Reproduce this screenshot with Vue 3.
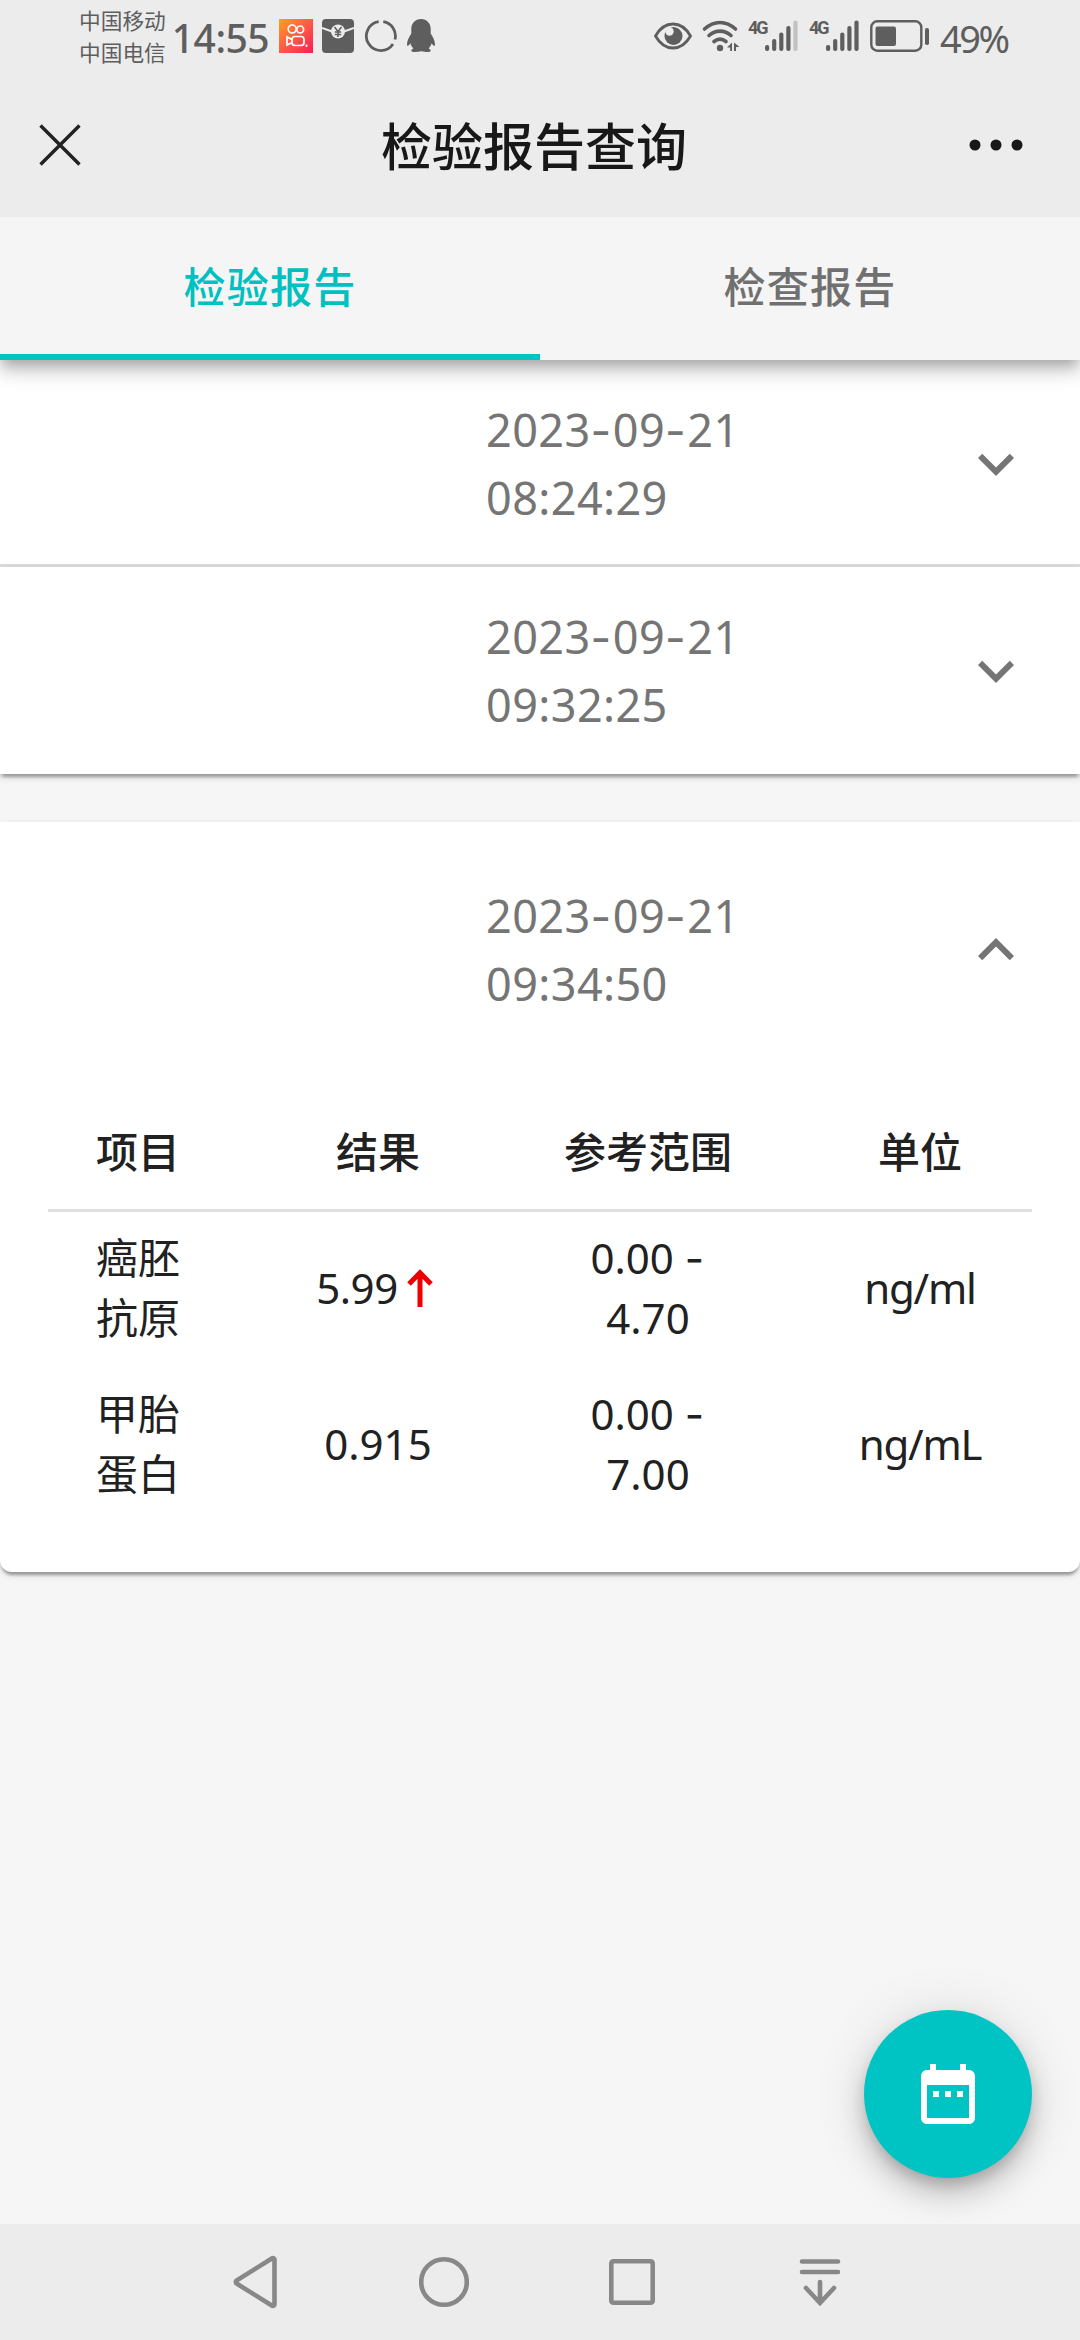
<template>
  <div class="page">
    <!-- 系统状态栏 -->
    <div class="status-bar">
      <div class="carriers">
        <span>中国移动</span>
        <span>中国电信</span>
      </div>
      <span class="clock">14:55</span>
      <div class="notice-icons">
        <svg width="34" height="34" viewBox="0 0 34 34">
          <defs>
            <linearGradient id="ks" x1="0" y1="0" x2="1" y2="1">
              <stop offset="0" stop-color="#ffa01e" />
              <stop offset="0.5" stop-color="#ff5a46" />
              <stop offset="1" stop-color="#f91d55" />
            </linearGradient>
          </defs>
          <rect width="34" height="34" fill="url(#ks)" />
          <g fill="none" stroke="#fff" stroke-width="1.7">
            <circle cx="13.2" cy="10" r="4" />
            <circle cx="21.2" cy="10.4" r="3.4" />
            <rect x="13" y="17.5" width="12" height="9" rx="3" />
            <path d="M13 20.5l-5-2.5v8l5-2.5" />
            <path d="M27.5 25.5v2.5" />
          </g>
        </svg>
        <svg width="32" height="34" viewBox="0 0 32 34">
          <rect width="32" height="34" rx="4" fill="#5e5e5e" />
          <path d="M0 9l10 3.5M32 9l-10 3.5" stroke="#ececec" stroke-width="2" />
          <circle cx="16" cy="12.5" r="7" fill="#ececec" />
          <path
            d="M12.5 8l3.5 4.5L19.5 8M16 12.5V18M12.8 13h6.4M12.8 15.500h6.4"
            fill="none"
            stroke="#5e5e5e"
            stroke-width="1.5"
          />
        </svg>
        <svg width="34" height="34" viewBox="0 0 34 34">
          <g fill="none" stroke="#5e5e5e" stroke-width="2.8">
            <path d="M19.3 2.7A14.5 14.5 0 0 1 31 20.5" />
            <path d="M29 25A14.5 14.5 0 1 1 14.7 2.7" />
          </g>
        </svg>
        <svg width="28" height="34" viewBox="0 0 28 34">
          <path
            d="M14 0C8 0 4.3 4.5 4.3 10v4.5C2 18 0 22 0 25.5c0 2 1.3 1.8 3.3-1.3.6 2 1.7 3.8 3 5.2-1.3.5-2 1.3-2 2.4 0 1 1.4 1.2 4.4 1.2 2.4 0 4.300-.2 5.300-.9 1 .7 2.900.9 5.300.9 3 0 4.400-.2 4.400-1.200 0-1.100-.7-1.900-2-2.400 1.300-1.400 2.400-3.200 3-5.200 2 3.100 3.300 3.300 3.300 1.300 0-3.500-2-7.500-4.300-11V10C23.700 4.500 20 0 14 0z"
            fill="#5e5e5e"
          />
        </svg>
      </div>

      <div class="system-icons">
        <svg class="eye" width="38" height="28" viewBox="0 0 38 28">
          <path
            d="M1.500 14C6 6 12 2 19 2s13 4 17.500 12C32 22 26 26 19 26S6 22 1.500 14z"
            fill="none"
            stroke="#5e5e5e"
            stroke-width="2.8"
          />
          <circle cx="19.5" cy="14" r="9" fill="#5e5e5e" />
          <circle cx="15.5" cy="9.500" r="4.2" fill="#ececec" />
        </svg>
        <svg class="wifi" width="38" height="32" viewBox="0 0 38 32">
          <g fill="none" stroke="#5e5e5e" stroke-width="3.6" stroke-linecap="round">
            <path d="M2.500 9C12 .3 24 .3 33.500 9" />
            <path d="M7 15.500c6.500-5.800 15.500-5.800 22 0" />
            <path d="M12 21.500c4-3.300 8-3.300 12 0" />
          </g>
          <circle cx="18" cy="28" r="3.2" fill="#5e5e5e" />
          <path d="M30 22.500v8.500h-1.800v-3.500H25zM32 31v-8.500l5.500 4.500h-3.500v4z" fill="#5e5e5e" />
        </svg>
        <div v-for="sim in sims" :key="sim.id" class="signal">
          <span>4G</span>
          <svg width="34" height="32" viewBox="0 0 34 32">
            <rect
              v-for="(bar, i) in bars"
              :key="i"
              :x="i * 7.1"
              :y="31 - bar"
              width="4.2"
              :height="bar"
              rx="2"
              :fill="i < sim.level ? '#5e5e5e' : '#c2c2c2'"
            />
          </svg>
        </div>
        <svg class="battery" width="60" height="32" viewBox="0 0 60 32">
          <rect x="1.300" y="1.300" width="50" height="29.400" rx="6" fill="none" stroke="#5e5e5e" stroke-width="2.4" />
          <rect x="5.500" y="6.500" width="20.500" height="19.500" rx="2" fill="#5e5e5e" />
          <rect x="55" y="8" width="4" height="17" rx="1.8" fill="#5e5e5e" />
        </svg>
        <span class="percent">49%</span>
      </div>
    </div>

    <!-- 标题栏 -->
    <header class="nav-bar">
      <svg width="42" height="42" viewBox="0 0 42 42">
        <path d="M1.500 1.500l39 39M40.500 1.500l-39 39" stroke="#222" stroke-width="3.4" />
      </svg>
      <h1>检验报告查询</h1>
      <svg width="54" height="12" viewBox="0 0 54 12">
        <circle cx="6" cy="6" r="5.5" fill="#181818" />
        <circle cx="27" cy="6" r="5.5" fill="#181818" />
        <circle cx="48" cy="6" r="5.5" fill="#181818" />
      </svg>
    </header>

    <div class="tabs">
      <button
        v-for="(tab, i) in tabs"
        :key="tab"
        class="tab"
        :class="{ 'is-active': i === activeTab }"
        @click="activeTab = i"
      >
        {{ tab }}
      </button>
    </div>

    <main class="content">
      <section
        v-for="report in reports"
        :key="report.time"
        class="panel"
        :class="{ 'is-expanded': report.expanded }"
      >
        <div class="panel-summary" @click="report.expanded = !report.expanded">
          <div class="panel-time">
            <div>
              <template v-for="(part, i) in report.date.split('-')" :key="i"
                ><span v-if="i" class="dash">-</span>{{ part }}</template
              >
            </div>
            <div>{{ report.time }}</div>
          </div>
          <svg class="expand-icon" width="72" height="72" viewBox="0 0 24 24">
            <path
              d="M16.59 8.59L12 13.17 7.41 8.59 6 10l6 6 6-6z"
              fill="#757575"
            />
          </svg>
        </div>

        <div v-if="report.expanded" class="panel-details">
          <div class="row row-head">
            <span>项目</span>
            <span>结果</span>
            <span>参考范围</span>
            <span>单位</span>
          </div>
          <div v-for="item in report.items" :key="item.name" class="row">
            <span class="item-name">{{ item.name }}</span>
            <span class="result" :class="{ 'is-high': item.high }">
              {{ item.result
              }}<svg v-if="item.high" width="26" height="38" viewBox="0 0 26 38">
                <path
                  d="M13 38V4M2 15L13 3.800 24 15"
                  fill="none"
                  stroke="#f00000"
                  stroke-width="5"
                />
              </svg>
            </span>
            <span class="range"
              >{{ item.low }} <span class="dash">-</span><br />{{ item.top }}</span
            >
            <span class="unit">{{ item.unit }}</span>
          </div>
        </div>
      </section>

      <button class="fab">
        <svg width="72" height="72" viewBox="0 0 24 24">
          <path
            d="M9 11H7v2h2v-2zm4 0h-2v2h2v-2zm4 0h-2v2h2v-2zm2-7h-1V2h-2v2H8V2H6v2H5c-1.110 0-1.990.9-1.990 2L3 20c0 1.100.89 2 2 2h14c1.100 0 2-.9 2-2V6c0-1.100-.9-2-2-2zm0 16H5V9h14v11z"
            fill="#fff"
          />
        </svg>
      </button>
    </main>

    <!-- 底部导航键 -->
    <nav class="system-nav">
      <svg width="50" height="54" viewBox="0 0 50 54">
        <path d="M43.500 4.500v45a1.500 1.500 0 0 1-2.300 1.200L5.500 28.500a2 2 0 0 1 0-3L41.200 3.300a1.500 1.500 0 0 1 2.300 1.200z" />
      </svg>
      <svg width="50" height="54" viewBox="0 0 50 54">
        <circle cx="25" cy="27" r="22.8" />
      </svg>
      <svg width="50" height="54" viewBox="0 0 50 54">
        <rect x="4.300" y="6.300" width="41.4" height="41.4" rx="2" />
      </svg>
      <svg width="50" height="54" viewBox="0 0 50 54" stroke-linecap="round">
        <path d="M7 6.500h36M7 17h36M25 27v21M11 33l14 15 14-15" />
      </svg>
    </nav>
  </div>
</template>

<script setup>
import { ref } from "vue";

const sims = [
  { id: 1, level: 4 },
  { id: 2, level: 5 },
];
const bars = [6, 12, 18.5, 25, 30.5];

const tabs = ["检验报告", "检查报告"];
const activeTab = ref(0);

const reports = ref([
  { date: "2023-09-21", time: "08:24:29", expanded: false, items: [] },
  { date: "2023-09-21", time: "09:32:25", expanded: false, items: [] },
  {
    date: "2023-09-21",
    time: "09:34:50",
    expanded: true,
    items: [
      { name: "癌胚抗原", result: "5.99", high: true, low: "0.00", top: "4.70", unit: "ng/ml" },
      { name: "甲胎蛋白", result: "0.915", high: false, low: "0.00", top: "7.00", unit: "ng/mL" },
    ],
  },
]);
</script>

<style>
body {
  margin: 0;
}
</style>

<style scoped>
.page {
  width: 1080px;
  height: 2340px;
  display: flex;
  flex-direction: column;
  overflow: hidden;
  background: #f6f6f6;
  font-family: "Noto Sans", "Noto Sans CJK SC", sans-serif;
}

.page svg {
  display: block;
  flex: none;
}

button {
  border: none;
  padding: 0;
  font-family: inherit;
}

.status-bar {
  height: 72px;
  box-sizing: border-box;
  padding: 0 70px 0 79px;
  display: flex;
  align-items: center;
  background: #ececec;
  color: #5e5e5e;
}

.carriers {
  display: flex;
  flex-direction: column;
  padding-top: 2px;
  font-size: 21.7px;
  line-height: 32px;
  white-space: nowrap;
}

.clock {
  margin-left: 6px;
  width: 107px;
  font-size: 39px;
  line-height: 72px;
  font-weight: 500;
  letter-spacing: -0.5px;
  padding-top: 3px;
}

.notice-icons {
  display: flex;
  align-items: center;
  gap: 9.5px;
}

.system-icons {
  margin-left: auto;
  display: flex;
  align-items: center;
}

.wifi {
  margin-left: 10px;
}

.signal {
  display: flex;
  align-items: flex-start;
}

.signal span {
  width: 17px;
  margin-left: 8px;
  font-family: Roboto, sans-serif;
  font-size: 18px;
  line-height: 15px;
  font-weight: 700;
  letter-spacing: -2px;
  white-space: nowrap;
}

.signal + .signal span {
  margin-left: 10px;
}

.battery {
  margin-left: 10px;
}

.percent {
  width: 70px;
  margin-left: 10px;
  font-size: 38px;
  line-height: 72px;
  letter-spacing: -2.5px;
  padding-top: 3px;
}

.nav-bar {
  height: 145px;
  box-sizing: border-box;
  padding: 0 57px 0 39px;
  display: flex;
  align-items: center;
  justify-content: space-between;
  background: #ececec;
}

.nav-bar h1 {
  margin: 2px 0 0 18px;
  font-size: 51px;
  line-height: 76px;
  font-weight: 500;
  color: #181818;
}

.tabs {
  position: relative;
  z-index: 2;
  height: 143px;
  flex: none;
  display: flex;
  background: #f5f5f5;
  box-shadow:
    0 6px 12px -3px rgba(0, 0, 0, 0.2),
    0 12px 15px 0 rgba(0, 0, 0, 0.14),
    0 3px 30px 0 rgba(0, 0, 0, 0.12);
  clip-path: inset(0 0 -60px 0);
}

.tab {
  flex: 1;
  padding-bottom: 2px;
  border-bottom: 6px solid transparent;
  background: transparent;
  font-size: 42px;
  font-weight: 500;
  letter-spacing: 1.2px;
  color: #707070;
}

.tab.is-active {
  border-color: #00c4c4;
  color: #00c0c0;
}

.content {
  position: relative;
  flex: 1;
}

.panel {
  background: #fff;
  box-shadow:
    0 6px 3px -3px rgba(0, 0, 0, 0.2),
    0 3px 3px 0 rgba(0, 0, 0, 0.14),
    0 3px 9px 0 rgba(0, 0, 0, 0.12);
}

.panel:first-child .panel-summary {
  border-bottom: 3px solid #dcdcdc;
  padding-bottom: 33px;
}

.panel.is-expanded {
  margin-top: 48px;
  border-radius: 0 0 12px 12px;
  padding-bottom: 48px;
}

.panel-summary {
  display: flex;
  align-items: center;
  justify-content: space-between;
  padding: 36px 48px 36px 486px;
}

.is-expanded .panel-summary {
  padding-top: 60px;
  padding-bottom: 60px;
}

.panel-time {
  font-size: 45px;
  line-height: 67.5px;
  letter-spacing: 0.4px;
  color: #757575;
}

.dash {
  font-family: Inter, sans-serif;
  line-height: 1;
  letter-spacing: 1.5px;
}

.is-expanded .expand-icon {
  transform: rotate(180deg);
}

.panel-details {
  margin: 0 48px;
  color: #212121;
  font-size: 42px;
  line-height: 60px;
}

.row {
  display: grid;
  grid-template-columns: 180px 300px 240px 304px;
  align-items: center;
  justify-items: center;
  height: 156px;
  box-sizing: border-box;
  padding-bottom: 4px;
  text-align: center;
}

.row-head {
  height: 135px;
  padding: 18px 0 0;
  border-bottom: 3px solid #e0e0e0;
  font-weight: 500;
}

.item-name {
  width: 84px;
}

.result {
  display: flex;
  align-items: center;
  gap: 9px;
}

.result.is-high {
  padding-right: 7px;
  letter-spacing: -0.5px;
}

.unit {
  letter-spacing: -1.2px;
}

.fab {
  position: absolute;
  right: 48px;
  bottom: 46px;
  width: 168px;
  height: 168px;
  border-radius: 50%;
  display: flex;
  align-items: center;
  justify-content: center;
  background: #00c4c4;
  box-shadow:
    0 9px 15px -3px rgba(0, 0, 0, 0.2),
    0 18px 30px 0 rgba(0, 0, 0, 0.14),
    0 3px 54px 0 rgba(0, 0, 0, 0.12);
}

.system-nav {
  height: 116px;
  flex: none;
  box-sizing: border-box;
  padding-left: 231px;
  display: flex;
  align-items: center;
  gap: 138px;
  background: #ececec;
}

.system-nav svg {
  fill: none;
  stroke: #888;
  stroke-width: 4.6;
}
</style>
